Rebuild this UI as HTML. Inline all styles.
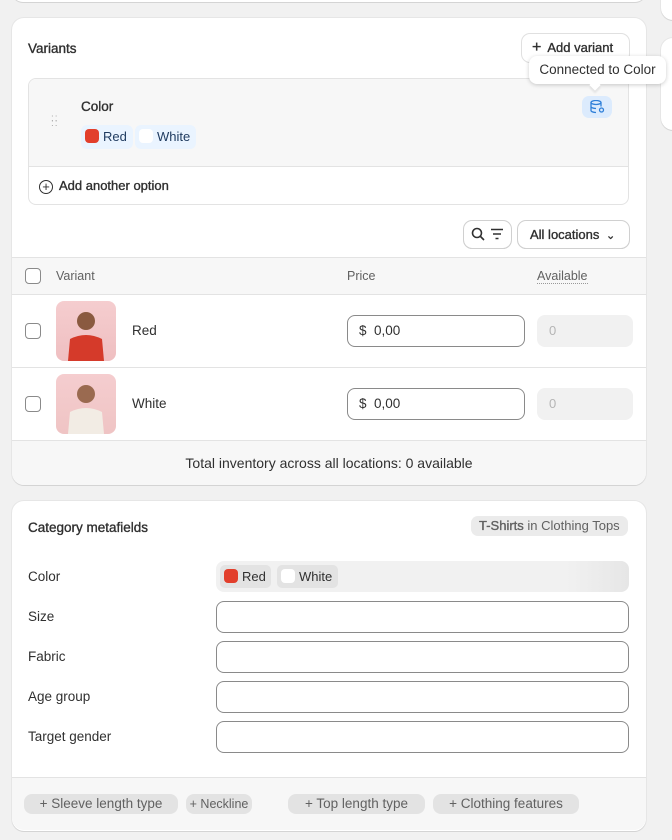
<!DOCTYPE html>
<html><head><meta charset="utf-8">
<style>
*{box-sizing:border-box;margin:0;padding:0}
body{width:672px;height:840px;background:#f1f1f1;font-family:"Liberation Sans",sans-serif;font-size:13px;color:#303030;position:relative;overflow:hidden}
.a{position:absolute}
.card{position:absolute;background:#fff;border-radius:12px;box-shadow:0 1px 0 #d4d4d4,0 0 0 1px #e6e6e6}
.cb{position:absolute;width:16px;height:16px;border:1px solid #8a8a8a;border-radius:4px;background:#fff}
.inp{position:absolute;border:1px solid #8a8a8a;border-radius:8px;background:#fff}
.dis{position:absolute;background:#f1f1f1;border-radius:8px;color:#b5b5b5;padding-left:12px;line-height:32px}
.chip{position:absolute;background:#e3e3e3;border-radius:8px;color:#616161;height:20px;line-height:20px;padding:0 7px;font-size:13.5px;white-space:nowrap;text-align:center;overflow:hidden}
.sw{display:inline-block;width:14px;height:14px;border-radius:4px;vertical-align:-2px;margin-right:4px}
.lbl{position:absolute;left:28px;font-size:13.5px}
.med{font-weight:normal;-webkit-text-stroke:0.35px currentColor}
</style></head><body>
<div class="card" style="left:12px;top:-20px;width:634px;height:22px"></div>
<div class="card" style="left:661px;top:-20px;width:30px;height:40px"></div>
<div class="card" style="left:661px;top:38px;width:30px;height:92px"></div>

<div class="card" style="left:12px;top:18px;width:634px;height:467px;overflow:hidden">
 <div class="a med" style="left:16px;top:23px;font-size:13.5px;color:#303030">Variants</div>
 <div class="a med" style="left:510px;top:16px;width:107px;height:28px;border-radius:8px;background:#fff;box-shadow:0 0 0 1px #e0e0e0,0 1px 0 #ccc;line-height:28px;padding-left:10px;font-size:13px"><span style="font-size:16px;margin-right:6px">+</span>Add variant</div>
 <div class="a" style="left:16px;top:60px;width:601px;height:127px;border:1px solid #e3e3e3;border-radius:8px;overflow:hidden">
  <div class="a" style="left:0;top:0;width:600px;height:88px;background:#f7f7f7;border-bottom:1px solid #e3e3e3"></div>
  <div class="a" style="left:22px;top:37px;color:#aaa;font-size:10px;line-height:5px;letter-spacing:1px">::<br>::</div>
  <div class="a med" style="left:52px;top:20px;color:#303030;font-size:13.5px">Color</div>
  <div class="a" style="left:52px;top:46px;height:24px;padding:0 6px 0 4px;background:#eaf4ff;border-radius:6px;line-height:24px;color:#1e3a5f"><span class="sw" style="background:#e23f2c"></span>Red</div>
  <div class="a" style="left:106px;top:46px;height:24px;padding:0 6px 0 4px;background:#eaf4ff;border-radius:6px;line-height:24px;color:#1e3a5f"><span class="sw" style="background:#fff"></span>White</div>
  <div class="a" style="left:553px;top:17px;width:30px;height:22px;background:#dcebfd;border-radius:7px">
   <svg class="a" style="left:8px;top:4px" width="15" height="14" viewBox="0 0 15 14" fill="none" stroke="#2f7fd8" stroke-width="1.3"><ellipse cx="6" cy="2.5" rx="5" ry="2"/><path d="M1 2.5v8c0 1.1 2.2 2 5 2M11 2.5v4M1 6.5c0 1.1 2.2 2 5 2"/><circle cx="11.5" cy="10" r="2"/></svg>
  </div>
  <div class="a med" style="left:10px;top:99px;font-size:13px"><span style="display:inline-block;width:14px;height:14px;border:1.3px solid #303030;border-radius:50%;text-align:center;line-height:11px;font-size:13px;margin-right:6px;vertical-align:-1px;-webkit-text-stroke:0">+</span>Add another option</div>
 </div>
 <div class="a" style="left:452px;top:203px;width:47px;height:27px;border-radius:8px;box-shadow:0 0 0 1px #d0d0d0,0 1px 0 #bbb">
  <svg class="a" style="left:7px;top:6px" width="34" height="15" viewBox="0 0 34 15" fill="none" stroke="#303030" stroke-width="1.6"><circle cx="6" cy="6" r="4.5"/><path d="M9.5 9.5l3.5 3.5M20 2.5h12M22 7h8M24.5 11.5h3"/></svg>
 </div>
 <div class="a med" style="left:506px;top:203px;width:111px;height:27px;border-radius:8px;box-shadow:0 0 0 1px #d0d0d0,0 1px 0 #bbb;line-height:27px;padding-left:12px;font-size:13px;color:#303030">All locations <span style="font-size:11px;margin-left:3px">&#8964;</span></div>
 <div class="a" style="left:0;top:239px;width:634px;height:38px;background:#f7f7f7;border-top:1px solid #e3e3e3;border-bottom:1px solid #e3e3e3"></div>
 <div class="cb" style="left:13px;top:250px"></div>
 <div class="a" style="left:44px;top:251px;color:#616161;font-size:12.5px">Variant</div>
 <div class="a" style="left:335px;top:251px;color:#616161;font-size:12.5px">Price</div>
 <div class="a" style="left:525px;top:251px;color:#616161;font-size:12.5px;border-bottom:1px dotted #999">Available</div>
 <div class="cb" style="left:13px;top:305px"></div>
 <div class="a" style="left:44px;top:283px;width:60px;height:60px;border-radius:8px;background:linear-gradient(#f5cdcf,#efbfc1);overflow:hidden">
  <svg width="60" height="60"><circle cx="30" cy="20" r="9" fill="#8a5a40"/><path d="M12 60 L14 38 Q30 30 46 38 L48 60Z" fill="#d53a2a"/></svg></div>
 <div class="a" style="left:120px;top:305px;font-size:13.5px">Red</div>
 <div class="inp" style="left:335px;top:297px;width:178px;height:32px;line-height:30px;padding-left:11px;font-size:13.5px">$&nbsp; 0,00</div>
 <div class="dis" style="left:525px;top:297px;width:96px;height:32px">0</div>
 <div class="a" style="left:0;top:349px;width:634px;height:1px;background:#e3e3e3"></div>
 <div class="cb" style="left:13px;top:378px"></div>
 <div class="a" style="left:44px;top:356px;width:60px;height:60px;border-radius:8px;background:linear-gradient(#f5cdcf,#efc4c4);overflow:hidden">
  <svg width="60" height="60"><circle cx="30" cy="20" r="9" fill="#9a6a50"/><path d="M12 60 L14 38 Q30 30 46 38 L48 60Z" fill="#f2ece4"/></svg></div>
 <div class="a" style="left:120px;top:378px;font-size:13.5px">White</div>
 <div class="inp" style="left:335px;top:370px;width:178px;height:32px;line-height:30px;padding-left:11px;font-size:13.5px">$&nbsp; 0,00</div>
 <div class="dis" style="left:525px;top:370px;width:96px;height:32px">0</div>
 <div class="a" style="left:0;top:422px;width:634px;height:45px;background:#f7f7f7;border-top:1px solid #e3e3e3;text-align:center;line-height:44px;font-size:14px">Total inventory across all locations: 0 available</div>
</div>

<div class="a" style="left:529px;top:56px;width:137px;height:28px;background:#fff;border-radius:8px;box-shadow:0 1px 4px rgba(0,0,0,.2);line-height:28px;text-align:center;font-size:13.5px;color:#303030">Connected to Color</div>
<div class="a" style="left:591px;top:81px;width:8px;height:8px;background:#fff;transform:rotate(45deg);box-shadow:2px 2px 2px rgba(0,0,0,.08)"></div>

<div class="card" style="left:12px;top:501px;width:634px;height:330px;overflow:hidden">
 <div class="a med" style="left:16px;top:19px;font-size:13.5px">Category metafields</div>
 <div class="a" style="left:459px;top:15px;height:20px;line-height:20px;padding:0 8px;background:#ebebeb;border-radius:7px;font-size:13px;color:#616161"><span class="med">T-Shirts</span> in Clothing Tops</div>
 <div class="a" style="left:204px;top:60px;width:413px;height:31px;background:linear-gradient(90deg,#f1f1f1 85%,#e6e6e6);border-radius:8px"></div>
 <div class="a" style="left:208px;top:64px;height:23px;padding:0 5px 0 4px;background:#e3e3e3;border-radius:5px;line-height:23px;font-size:13px"><span class="sw" style="background:#e23f2c"></span>Red</div>
 <div class="a" style="left:265px;top:64px;height:23px;padding:0 6px 0 4px;background:#e3e3e3;border-radius:5px;line-height:23px;font-size:13px"><span class="sw" style="background:#fff"></span>White</div>
</div>
<div class="lbl" style="top:569px">Color</div>
<div class="lbl" style="top:609px">Size</div>
<div class="lbl" style="top:649px">Fabric</div>
<div class="lbl" style="top:689px">Age group</div>
<div class="lbl" style="top:729px">Target gender</div>
<div class="inp" style="left:216px;top:601px;width:413px;height:32px"></div>
<div class="inp" style="left:216px;top:641px;width:413px;height:32px"></div>
<div class="inp" style="left:216px;top:681px;width:413px;height:32px"></div>
<div class="inp" style="left:216px;top:721px;width:413px;height:32px"></div>
<div class="a" style="left:12px;top:777px;width:634px;height:53px;background:#f7f7f7;border-top:1px solid #e3e3e3;border-radius:0 0 12px 12px"></div>
<div class="chip" style="left:24px;top:794px;width:154px">+ Sleeve length type</div>
<div class="chip" style="left:186px;top:794px;width:66px;font-size:12.5px;padding:0 3px">+ Neckline</div>
<div class="chip" style="left:288px;top:794px;width:137px">+ Top length type</div>
<div class="chip" style="left:433px;top:794px;width:146px">+ Clothing features</div>
</body></html>
